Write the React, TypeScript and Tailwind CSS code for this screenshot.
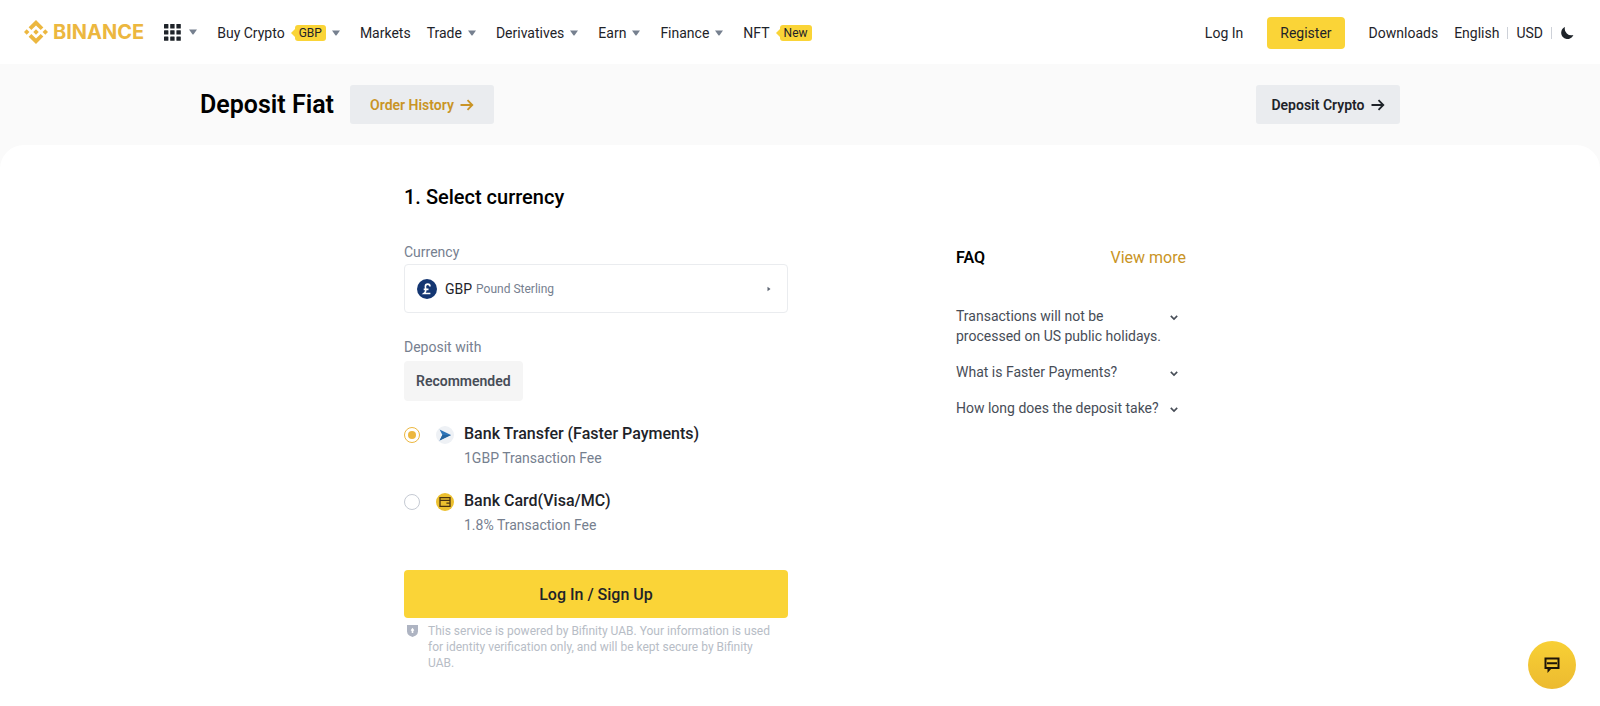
import React, { useState } from 'react';

type NavItem = { label: string; badge?: string; menu?: boolean };

const navItems: NavItem[] = [
  { label: 'Buy Crypto', badge: 'GBP', menu: true },
  { label: 'Markets' },
  { label: 'Trade', menu: true },
  { label: 'Derivatives', menu: true },
  { label: 'Earn', menu: true },
  { label: 'Finance', menu: true },
  { label: 'NFT', badge: 'New' },
];

const currencies = [
  { code: 'GBP', name: 'Pound Sterling' },
  { code: 'EUR', name: 'Euro' },
];

const questions = [
  'Transactions will not be processed on US public holidays.',
  'What is Faster Payments?',
  'How long does the deposit take?',
];

const Logo = () => (
  <a href="#" className="flex items-center gap-[5px] text-[#ecb73f]">
    <svg viewBox="0 0 126.61 126.61" className="size-6" fill="currentColor" aria-hidden="true">
      <path d="M38.73 53.2l24.59-24.58 24.6 24.6 14.3-14.31L63.32 0l-38.9 38.9z" />
      <path d="M0 63.31l14.3-14.31 14.31 14.31-14.31 14.3z" />
      <path d="M38.73 73.41l24.59 24.59 24.6-24.6 14.31 14.29-38.91 38.92-38.91-38.88z" />
      <path d="M98 63.31l14.3-14.31 14.31 14.3-14.31 14.32z" />
      <path d="M77.83 63.3L63.32 48.78 48.78 63.3l14.54 14.52z" />
    </svg>
    <span className="font-['Inter'] text-[20px] leading-6 font-bold">BINANCE</span>
  </a>
);

const Caret = () => (
  <svg viewBox="0 0 8 6" className="w-2 h-[6px] shrink-0" fill="#76808f" aria-hidden="true">
    <path d="M0 0.5h8L4.6 5.2a.8.8 0 0 1-1.2 0z" />
  </svg>
);

const Badge: React.FC<{ text: string }> = ({ text }) => (
  <span className="flex items-center">
    <svg viewBox="0 0 4 8" className="w-1 h-2" fill="#fad437" aria-hidden="true">
      <path d="M4 0v8L0 4z" />
    </svg>
    <span className="rounded-[3px] bg-[#fad437] px-1 text-xs leading-4">{text}</span>
  </span>
);

const ArrowRight = () => (
  <svg viewBox="0 0 14 12" className="w-[14px] h-3" fill="none" stroke="currentColor" strokeWidth="1.8" aria-hidden="true">
    <path d="M0.5 6h11.500M7.500 1.200L12.300 6l-4.800 4.800" />
  </svg>
);

const Chevron = () => (
  <svg viewBox="0 0 8 6" className="mt-[9px] w-2 h-[6px] shrink-0" fill="none" stroke="#474d57" strokeWidth="1.6" aria-hidden="true">
    <path d="M0.8 0.9L4 4.1 7.2 0.9" />
  </svg>
);

const GridIcon = () => (
  <svg viewBox="0 0 17 17" className="size-[17px]" fill="#1e2329" aria-hidden="true">
    {[0, 6.2, 12.4].map(y => [0, 6.2, 12.4].map(x => (
      <rect key={`${x}-${y}`} x={x} y={y} width="4.4" height="4.4" rx="0.5" />
    )))}
  </svg>
);

const TransferIcon = () => (
  <svg viewBox="0 0 18 18" className="size-[18px]" aria-hidden="true">
    <circle cx="9" cy="9" r="9" fill="#eef1f5" />
    <path d="M3.600 3.600L15 9 3.600 14.400 6.400 9z" fill="#2c74b8" />
    <path d="M6.400 9H15L3.600 14.400z" fill="#24649f" />
  </svg>
);

const CardIcon = () => (
  <svg viewBox="0 0 18 18" className="size-[18px]" aria-hidden="true">
    <circle cx="9" cy="9" r="9" fill="#ecc02f" />
    <path d="M4 4.600h10v8.800H4zM4 7.400h10M10.400 10.200H14" fill="none" stroke="#4a3210" strokeWidth="1.3" />
  </svg>
);

const methods = [
  { id: 'bank-transfer', title: 'Bank Transfer (Faster Payments)', fee: '1GBP Transaction Fee', icon: <TransferIcon /> },
  { id: 'bank-card', title: 'Bank Card(Visa/MC)', fee: '1.8% Transaction Fee', icon: <CardIcon /> },
];

const Header = () => (
  <header className="flex h-16 items-center justify-between bg-white px-6 text-sm text-[#1e2329]">
    <div className="flex items-center">
      <Logo />
      <button className="ml-5 flex items-center gap-2" aria-label="Products">
        <GridIcon />
        <Caret />
      </button>
      <nav className="ml-5 flex items-center pt-px">
        {navItems.map(item => (
          <a key={item.label} href="#" className={`flex items-center gap-[6px] ${item.menu ? 'mr-5' : 'mr-4'}`}>
            {item.label}
            {item.badge && <Badge text={item.badge} />}
            {item.menu && <Caret />}
          </a>
        ))}
      </nav>
    </div>
    <div className="flex items-center pt-px">
      <a href="#">Log In</a>
      <button className="mx-6 h-8 rounded bg-[#fad437] px-[13px]">Register</button>
      <a href="#">Downloads</a>
      <button className="ml-4">English</button>
      <span className="mx-2 h-3 w-px bg-[#cdd1d8]" />
      <button>USD</button>
      <span className="mx-2 h-3 w-px bg-[#cdd1d8]" />
      <button className="pr-[2px]" aria-label="Dark mode">
        <svg viewBox="0 0 14 14" className="size-[14px]" fill="#1e2329" aria-hidden="true">
          <path d="M5 1a6.3 6.3 0 1 0 8.4 8A6.6 6.6 0 0 1 5 1z" />
        </svg>
      </button>
    </div>
  </header>
);

const CurrencyField = () => {
  const [code, setCode] = useState('GBP');
  const selected = currencies.find(c => c.code === code);

  return (
    <div>
      <label htmlFor="currency" className="block text-sm leading-6 text-[#76808f]">Currency</label>
      <div className="flex h-[49px] items-center rounded border border-[#eaecef] px-3">
        <svg viewBox="0 0 20 20" className="mr-2 size-5" aria-hidden="true">
          <circle cx="10" cy="10" r="10" fill="#143672" />
          <path d="M13 7.400c0-3-4.600-3.200-4.600.2 0 1.800.8 3 .2 4.600-.3.9-.8 1.700-1.600 2.300H13.400M6.700 10.400h4.800" fill="none" stroke="#fff" strokeWidth="1.6" />
        </svg>
        <select
          id="currency"
          value={code}
          onChange={e => setCode(e.target.value)}
          className="field-sizing-content appearance-none bg-transparent text-sm text-[#1e2329]"
        >
          {currencies.map(c => <option key={c.code} value={c.code}>{c.code}</option>)}
        </select>
        <span className="ml-1 text-xs text-[#76808f]">{selected?.name}</span>
        <svg viewBox="0 0 4 6" className="mr-1 ml-auto h-[6px] w-1" fill="#5e6673" aria-hidden="true">
          <path d="M0.500 0.800L3.500 3 .5 5.200z" />
        </svg>
      </div>
    </div>
  );
};

const DepositForm = () => {
  const [method, setMethod] = useState('bank-transfer');

  return (
    <form className="w-96" onSubmit={e => e.preventDefault()}>
      <CurrencyField />
      <fieldset className="mt-[22px]">
        <legend className="text-sm leading-6 text-[#76808f]">Deposit with</legend>
        <button type="button" className="mt-[2px] h-10 rounded bg-[#f5f5f5] px-3 text-sm font-semibold text-[#474d57]">
          Recommended
        </button>
        <div className="mt-[21px] space-y-[19px]">
          {methods.map(m => (
            <label key={m.id} htmlFor={m.id} className="flex items-start">
              <input
                type="radio"
                id={m.id}
                name="method"
                checked={method === m.id}
                onChange={() => setMethod(m.id)}
                className="mt-[5px] flex size-4 appearance-none items-center justify-center rounded-full border border-[#c5cad3] checked:border-[#ecb73f] checked:before:size-2 checked:before:rounded-full checked:before:bg-[#ecb73f]"
              />
              <span className="mt-1 mr-[10px] ml-4">{m.icon}</span>
              <span>
                <span className="block text-base leading-6 font-medium text-[#1e2329]">{m.title}</span>
                <span className="block text-sm leading-6 text-[#76808f]">{m.fee}</span>
              </span>
            </label>
          ))}
        </div>
      </fieldset>
      <button className="mt-[33px] h-12 w-full rounded bg-[#fad437] pt-[2px] text-base font-medium text-[#1e2329]">
        Log In / Sign Up
      </button>
      <div className="mt-[5px] flex gap-[10px] pr-3 pl-[3px] text-xs leading-4 text-[#b7bdc6]">
        <svg viewBox="0 0 11 12" className="mt-[2px] h-3 w-[11px] shrink-0" fill="#aeb4c2" aria-hidden="true">
          <path fillRule="evenodd" d="M0 0h11v6.500a5 5 0 0 1-2.200 4L5.500 12 2.200 10.500A5 5 0 0 1 0 6.500zM5.500 2.800L3.700 5.200l1 .8v2h1.600V6l1-.8z" />
        </svg>
        <p>
          This service is powered by Bifinity UAB. Your information is used for identity verification only, and will be kept secure by Bifinity UAB.
        </p>
      </div>
    </form>
  );
};

const Faq = () => (
  <aside className="w-[230px] pt-[6px]">
    <div className="flex items-center justify-between text-base leading-6">
      <h3 className="font-semibold text-black">FAQ</h3>
      <a href="#" className="text-[#c99425]">View more</a>
    </div>
    <ul className="mt-9 space-y-4">
      {questions.map(q => (
        <li key={q}>
          <button className="flex w-full items-start justify-between pr-2 text-left text-sm leading-5 text-[#474d57]">
            <span className="w-[208px]">{q}</span>
            <Chevron />
          </button>
        </li>
      ))}
    </ul>
  </aside>
);

const App: React.FC = () => (
  <div className="flex min-h-screen flex-col bg-[#fafafa] font-['Roboto',sans-serif]">
    <Header />
    <div className="mx-auto flex w-full max-w-[1200px] items-center py-[21px]">
      <h1 className="text-[25px] leading-8 font-semibold text-black">Deposit Fiat</h1>
      <a href="#" className="ml-4 flex h-[39px] w-36 items-center justify-center gap-[6px] rounded-[3px] bg-[#eaecef] pt-px text-sm font-semibold text-[#c99425]">
        Order History <ArrowRight />
      </a>
      <a href="#" className="ml-auto flex h-[39px] w-36 items-center justify-center gap-[6px] rounded-[3px] bg-[#eaecef] pt-px text-sm font-semibold text-[#1e2329]">
        Deposit Crypto <ArrowRight />
      </a>
    </div>
    <main className="flex-1 rounded-t-3xl bg-white pt-9 pb-8">
      <div className="mx-auto max-w-[1200px] pl-[204px]">
        <h2 className="text-xl leading-8 font-medium text-black">1. Select currency</h2>
        <div className="mt-[27px] flex items-start gap-[168px]">
          <DepositForm />
          <Faq />
        </div>
      </div>
    </main>
    <button
      className="fixed right-6 bottom-[17px] flex size-12 items-center justify-center rounded-full bg-gradient-to-b from-[#f8d035] to-[#ecba30]"
      aria-label="Support chat"
    >
      <svg viewBox="0 0 16 16" className="size-4" fill="none" stroke="#1e1508" strokeWidth="2" aria-hidden="true">
        <path d="M1.500 1.500h13v9.500h-13zM3 6.300h10" />
        <path d="M3.500 11h4.500l-4.500 5z" fill="#1e1508" stroke="none" />
      </svg>
    </button>
  </div>
);

export default App;
